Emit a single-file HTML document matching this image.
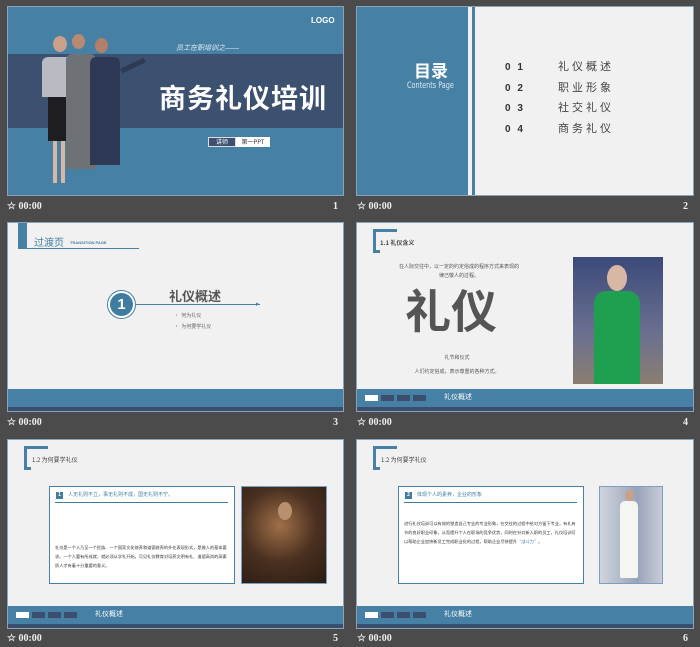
<!DOCTYPE html>
<html><head><meta charset="utf-8"><style>
*{margin:0;padding:0;box-sizing:border-box}
body{width:700px;height:647px;background:#4b4b4b;position:relative;overflow:hidden;font-family:"Liberation Sans","Noto Sans CJK SC",sans-serif}
.a{position:absolute}
.s{position:absolute;background:#f1f1f1;border:1px solid #8aa3b8;overflow:hidden}
.lbl{position:absolute;color:#eee;font:bold 10px "Liberation Serif",serif}
.num{position:absolute;color:#eee;font:bold 10px "Liberation Serif",serif}
.ft1{position:absolute;left:0;right:0;background:#4680a4}
.ft2{position:absolute;left:0;right:0;background:#3b4e6e}
.sq{position:absolute;width:13px;height:6px;background:#3b4e6e}
.t{position:absolute;white-space:nowrap}
</style></head><body>

<!-- slide 1 -->
<div class="s" style="left:7px;top:6px;width:337px;height:190px;background:#4680a4">
 <div class="a" style="left:0;top:47px;width:337px;height:74px;background:#3c506f"></div>
 <div class="t" style="left:303px;top:9px;color:#fff;font:bold 8px 'Liberation Sans';">LOGO</div>
 <div class="t" style="left:168px;top:36px;color:#e6eef5;font:italic 7px 'Liberation Sans','Noto Sans CJK SC';">员工在职培训之——</div>
 <div class="t" style="left:151px;top:70px;color:#fff;font:bold 27px 'Noto Sans CJK SC',sans-serif;letter-spacing:1px">商务礼仪培训</div>
 <div class="a" style="left:200px;top:130px;width:28px;height:10px;background:#3c506f;border:1px solid #ddd;color:#fff;font:6px 'Noto Sans CJK SC';text-align:center;line-height:8px">讲师</div>
 <div class="a" style="left:228px;top:130px;width:34px;height:10px;background:#fff;color:#333;font:6px 'Noto Sans CJK SC';text-align:center;line-height:10px">第一PPT</div>
 <!-- people -->
 <div class="a" style="left:45px;top:29px;width:14px;height:16px;border-radius:50%;background:#c9a08a"></div>
 <div class="a" style="left:34px;top:50px;width:34px;height:40px;background:#b8bcc2;border-radius:6px 6px 0 0"></div>
 <div class="a" style="left:40px;top:90px;width:24px;height:44px;background:#1e1e22"></div>
 <div class="a" style="left:45px;top:134px;width:4px;height:42px;background:#d8b8a4"></div>
 <div class="a" style="left:53px;top:134px;width:4px;height:42px;background:#d8b8a4"></div>
 <div class="a" style="left:64px;top:27px;width:13px;height:15px;border-radius:50%;background:#b88a72"></div>
 <div class="a" style="left:58px;top:47px;width:30px;height:115px;background:#6e7176;border-radius:6px 6px 0 0"></div>
 <div class="a" style="left:87px;top:31px;width:13px;height:15px;border-radius:50%;background:#b08068"></div>
 <div class="a" style="left:82px;top:50px;width:30px;height:108px;background:#2e3a55;border-radius:6px 6px 0 0"></div>
 <div class="a" style="left:112px;top:56px;width:26px;height:5px;background:#2e3a55;transform:rotate(-25deg)"></div>
</div>
<div class="lbl" style="left:7px;top:201px">☆ 00:00</div><div class="num" style="left:333px;top:201px">1</div>

<!-- slide 2 -->
<div class="s" style="left:356px;top:6px;width:338px;height:190px">
 <div class="a" style="left:0;top:0;width:111px;height:190px;background:#4680a4"></div>
 <div class="a" style="left:115px;top:0;width:3px;height:190px;background:#4680a4"></div>
 <div class="t" style="left:57px;top:50px;color:#fff;font:bold 17px 'Noto Sans CJK SC'">目录</div>
 <div class="t" style="left:50px;top:74px;color:#dde8f0;font:9px 'DejaVu Sans Condensed','Liberation Sans';transform:scaleX(.8);transform-origin:left">Contents Page</div>
 <div class="t" style="left:148px;top:51px;color:#333;font:bold 10px 'Liberation Sans';line-height:20.5px;letter-spacing:2px">0 1<br>0 2<br>0 3<br>0 4</div>
 <div class="t" style="left:201px;top:49px;color:#444;font:11px 'Noto Sans CJK SC';line-height:20.5px;letter-spacing:3px">礼仪概述<br>职业形象<br>社交礼仪<br>商务礼仪</div>
</div>
<div class="lbl" style="left:357px;top:201px">☆ 00:00</div><div class="num" style="left:683px;top:201px">2</div>

<!-- slide 3 -->
<div class="s" style="left:7px;top:222px;width:337px;height:190px">
 <div class="a" style="left:10px;top:0;width:9px;height:26px;background:#4680a4"></div>
 <div class="a" style="left:10px;top:25px;width:121px;height:1px;background:#4680a4"></div>
 <div class="t" style="left:26px;top:11px;color:#4680a4;font:10px 'Noto Sans CJK SC'">过渡页</div>
 <div class="t" style="left:62px;top:17px;color:#4680a4;font:bold 4px 'Liberation Sans'">TRANSITION PAGE</div>
 <div class="a" style="left:99px;top:67px;width:29px;height:29px;border-radius:50%;border:1px solid #4680a4;background:#fff"></div>
 <div class="a" style="left:102px;top:70px;width:23px;height:23px;border-radius:50%;background:#3f7ca0;color:#fff;font:bold 15px 'Liberation Sans';text-align:center;line-height:23px">1</div>
 <div class="a" style="left:128px;top:81px;width:124px;height:1px;background:#4680a4"></div>
 <div class="t" style="left:248px;top:77px;color:#4680a4;font:7px sans-serif">▸</div>
 <div class="t" style="left:161px;top:63px;color:#555;font:bold 13px 'Noto Sans CJK SC'">礼仪概述</div>
 <div class="t" style="left:166px;top:87px;color:#666;font:5px 'Noto Sans CJK SC';line-height:11px">•&nbsp;&nbsp;何为礼仪<br>•&nbsp;&nbsp;为何要学礼仪</div>
 <div class="ft1" style="top:166px;height:18px"></div><div class="ft2" style="top:184px;height:6px"></div>
</div>
<div class="lbl" style="left:7px;top:417px">☆ 00:00</div><div class="num" style="left:333px;top:417px">3</div>

<!-- slide 4 -->
<div class="s" style="left:356px;top:222px;width:338px;height:190px">
 <div class="a" style="left:16px;top:6px;width:24px;height:24px;border-left:3px solid #4680a4;border-top:3px solid #4680a4"></div>
 <div class="a" style="left:16px;top:27px;width:7px;height:3px;background:#4680a4"></div>
 <div class="t" style="left:23px;top:15px;color:#444;font:bold 6px 'Noto Sans CJK SC'">1.1 礼仪含义</div>
 <div class="t" style="left:42px;top:39px;width:120px;text-align:center;color:#555;font:5px 'Noto Sans CJK SC';line-height:9px;white-space:normal">在人际交往中，以一定的约定俗成的程序方式来表现的律己敬人的过程。</div>
 <div class="t" style="left:48px;top:53px;color:#555;font:bold 46px 'Noto Sans CJK SC'">礼仪</div>
 <div class="t" style="left:40px;top:128px;width:120px;text-align:center;color:#555;font:5px 'Noto Sans CJK SC';line-height:14px">礼节和仪式<br>人们约定俗成，表示尊重的各种方式。</div>
 <div class="a" style="left:216px;top:34px;width:90px;height:127px;background:linear-gradient(#3c4a7a,#6a7090 60%,#8a7e70)"></div>
 <div class="a" style="left:250px;top:42px;width:20px;height:26px;border-radius:50%;background:#d8b8a4"></div>
 <div class="a" style="left:237px;top:68px;width:46px;height:93px;background:#1fa050;border-radius:12px 12px 0 0"></div>
 <div class="ft1" style="top:166px;height:18px"></div><div class="ft2" style="top:184px;height:6px"></div>
 <div class="sq" style="left:8px;top:172px;background:#fff"></div><div class="sq" style="left:24px;top:172px"></div><div class="sq" style="left:40px;top:172px"></div><div class="sq" style="left:56px;top:172px"></div>
 <div class="t" style="left:87px;top:169px;color:#fff;font:7px 'Noto Sans CJK SC'">礼仪概述</div>
</div>
<div class="lbl" style="left:357px;top:417px">☆ 00:00</div><div class="num" style="left:683px;top:417px">4</div>

<!-- slide 5 -->
<div class="s" style="left:7px;top:439px;width:337px;height:190px">
 <div class="a" style="left:16px;top:6px;width:24px;height:24px;border-left:3px solid #4680a4;border-top:3px solid #4680a4"></div>
 <div class="a" style="left:16px;top:27px;width:7px;height:3px;background:#4680a4"></div>
 <div class="t" style="left:24px;top:15px;color:#444;font:6px 'Noto Sans CJK SC'">1.2 为何要学礼仪</div>
 <div class="a" style="left:41px;top:46px;width:186px;height:98px;background:#fff;border:1px solid #4680a4"></div>
 <div class="a" style="left:48px;top:52px;width:7px;height:7px;background:#3f7ca0;color:#fff;font:bold 5px sans-serif;text-align:center;line-height:7px">1</div>
 <div class="t" style="left:60px;top:51px;color:#3f7ca0;font:5px 'Noto Sans CJK SC'">人无礼则不立，事无礼则不成，国无礼则不宁。</div>
 <div class="a" style="left:47px;top:62px;width:173px;height:1px;background:#3f7ca0"></div>
 <div class="t" style="left:47px;top:104px;width:175px;color:#333;font:4.2px 'Noto Sans CJK SC';line-height:9px;white-space:normal">礼仪是一个人乃至一个民族、一个国家文化修养和道德修养的外在表现形式，是做人的基本要求。一个人要有所成就，就必须从学礼开始。可见礼仪教育对培养文明有礼、道德高尚的高素质人才有着十分重要的意义。</div>
 <div class="a" style="left:233px;top:46px;width:86px;height:98px;background:radial-gradient(circle at 45% 40%,#a07048,#4a3020 50%,#2a1c12);border:1px solid #7aa0bd"></div>
 <div class="a" style="left:270px;top:62px;width:14px;height:18px;border-radius:50%;background:#b8906e"></div>
 <div class="ft1" style="top:166px;height:18px"></div><div class="ft2" style="top:184px;height:6px"></div>
 <div class="sq" style="left:8px;top:172px;background:#fff"></div><div class="sq" style="left:24px;top:172px"></div><div class="sq" style="left:40px;top:172px"></div><div class="sq" style="left:56px;top:172px"></div>
 <div class="t" style="left:87px;top:169px;color:#fff;font:7px 'Noto Sans CJK SC'">礼仪概述</div>
</div>
<div class="lbl" style="left:7px;top:633px">☆ 00:00</div><div class="num" style="left:333px;top:633px">5</div>

<!-- slide 6 -->
<div class="s" style="left:356px;top:439px;width:338px;height:190px">
 <div class="a" style="left:16px;top:6px;width:24px;height:24px;border-left:3px solid #4680a4;border-top:3px solid #4680a4"></div>
 <div class="a" style="left:16px;top:27px;width:7px;height:3px;background:#4680a4"></div>
 <div class="t" style="left:24px;top:15px;color:#444;font:6px 'Noto Sans CJK SC'">1.2 为何要学礼仪</div>
 <div class="a" style="left:41px;top:46px;width:186px;height:98px;background:#fff;border:1px solid #4680a4"></div>
 <div class="a" style="left:48px;top:52px;width:7px;height:7px;background:#3f7ca0;color:#fff;font:bold 5px sans-serif;text-align:center;line-height:7px">2</div>
 <div class="t" style="left:60px;top:51px;color:#3f7ca0;font:5px 'Noto Sans CJK SC'">体现个人的素养，企业的形象</div>
 <div class="a" style="left:47px;top:62px;width:173px;height:1px;background:#3f7ca0"></div>
 <div class="t" style="left:47px;top:80px;width:175px;color:#333;font:4.2px 'Noto Sans CJK SC';line-height:9px;white-space:normal">进行礼仪培训可以有效的塑造自己专业的专业形象，在交往的过程中给对方留下专业，有礼有节的良好职业印象，从而提升个人在职场的竞争优势，同时在针对新入职的员工，礼仪培训可以帮助企业加快新员工完成职业化的过程，帮助企业尽快提升<span style="color:#3f7ca0">“战斗力”</span>。</div>
 <div class="a" style="left:242px;top:46px;width:64px;height:98px;background:linear-gradient(90deg,#d0d4de,#9aa4b8 60%,#c8ccd8);border:1px solid #7aa0bd"></div>
 <div class="a" style="left:268px;top:50px;width:9px;height:11px;border-radius:50%;background:#c8a088"></div>
 <div class="a" style="left:263px;top:61px;width:18px;height:77px;background:#f4f6f4;border-radius:5px 5px 2px 2px"></div>
 <div class="ft1" style="top:166px;height:18px"></div><div class="ft2" style="top:184px;height:6px"></div>
 <div class="sq" style="left:8px;top:172px;background:#fff"></div><div class="sq" style="left:24px;top:172px"></div><div class="sq" style="left:40px;top:172px"></div><div class="sq" style="left:56px;top:172px"></div>
 <div class="t" style="left:87px;top:169px;color:#fff;font:7px 'Noto Sans CJK SC'">礼仪概述</div>
</div>
<div class="lbl" style="left:357px;top:633px">☆ 00:00</div><div class="num" style="left:683px;top:633px">6</div>

</body></html>
